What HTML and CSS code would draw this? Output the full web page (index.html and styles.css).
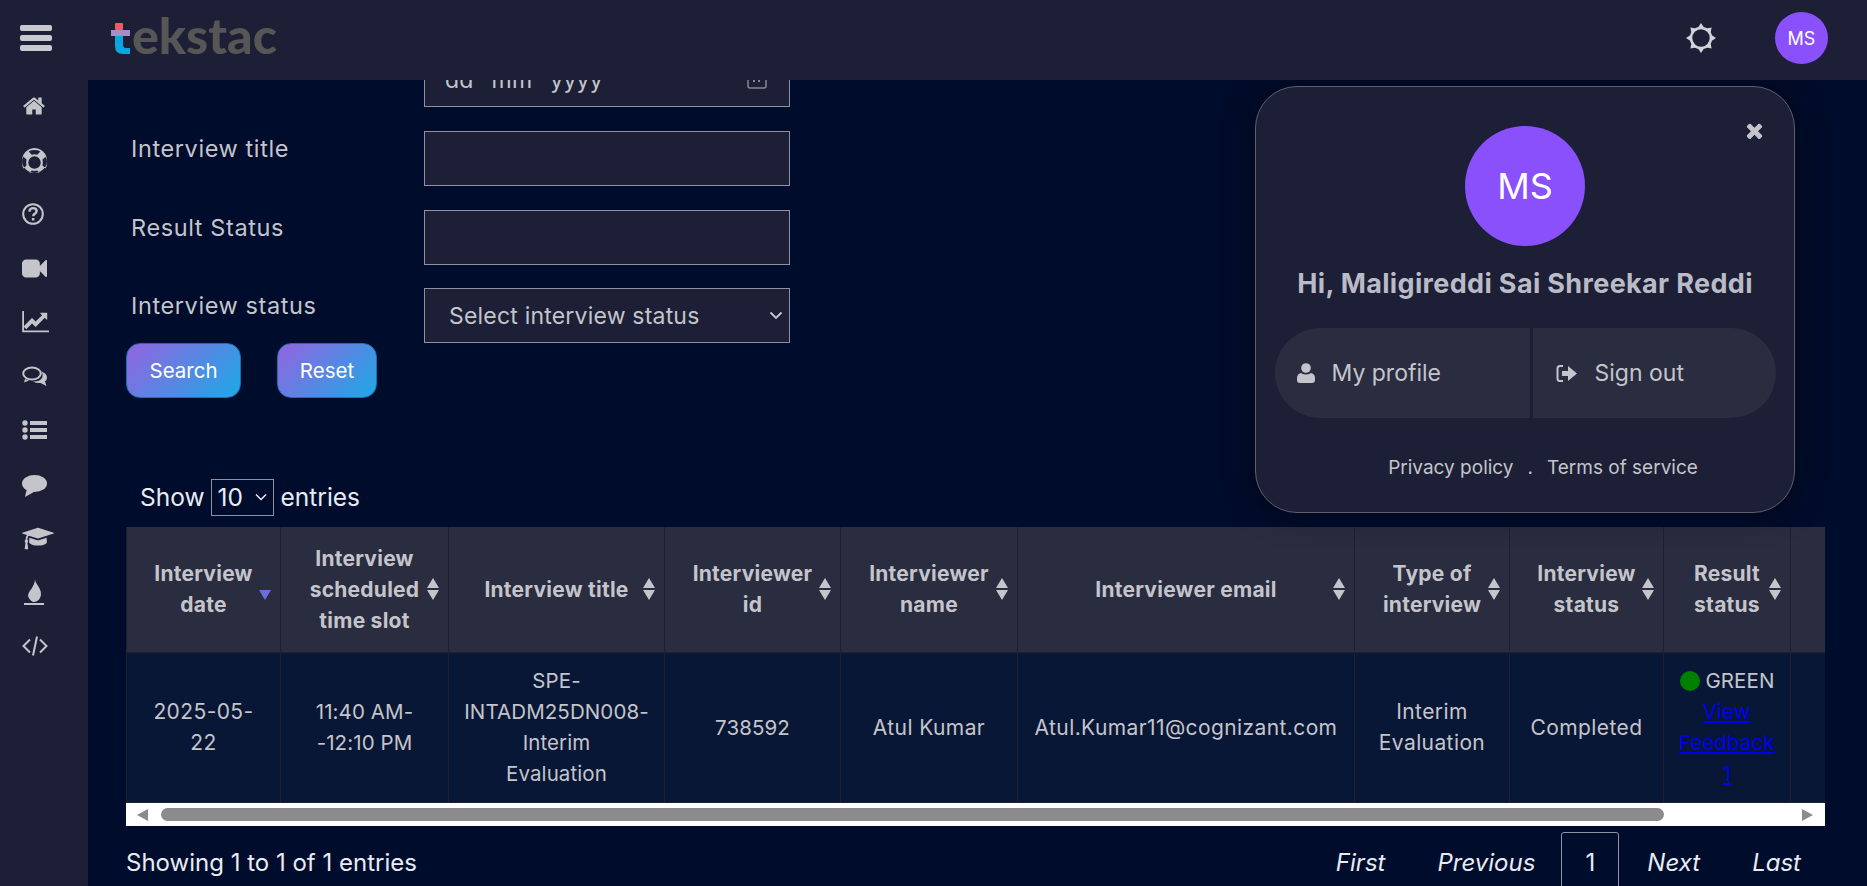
FILE: index.html
```html
<!DOCTYPE html>
<html lang="en">
<head>
    <meta charset="UTF-8">
    <title>Tekstac - Interview results</title>
    <link rel="stylesheet" href="styles.css">
</head>
<body>
    <header class="topbar">
        <div class="menu-btn"><span></span><span></span><span></span></div>
        <div class="logo">
            <svg class="logo-t" viewBox="0 0 19 37"><rect x="4" y="6" width="8" height="7" rx="1" fill="#ef5a6a"/><path d="M4 19h8v9q0 3 3 3h4v6h-7q-8 0-8-8z" fill="#0aa5de"/><rect x="0" y="13" width="19" height="6" fill="#a78fc6"/></svg><span>ekstac</span>
        </div>
        <div class="topbar-right">
            <svg class="theme-icon" viewBox="0 0 30 30"><circle cx="15" cy="15" r="10" fill="none" stroke="#d2d3d8" stroke-width="2.6"/><path d="M15 0l3 4.500h-6zM15 30l-3-4.500h6zM0 15l4.500-3v6zM30 15l-4.500 3v-6zM4.400 4.400l5.300 1-4.300 4.300zM25.600 25.600l-5.300-1 4.300-4.300zM25.600 4.400l-1 5.300-4.300-4.300zM4.400 25.600l1-5.300 4.300 4.300z" fill="#d2d3d8"/></svg>
            <div class="avatar">MS</div>
        </div>
    </header>

    <div class="layout">
        <aside class="sidebar">
            <a class="side-item"><svg width="24" height="24" viewBox="0 0 1792 1792"><path d="M1472 992v480q0 26-19 45t-45 19h-384v-384h-256v384h-384q-26 0-45-19t-19-45v-480q0-1 .5-3t.5-3l575-474 575 474q1 2 1 6zm223-69l-62 74q-8 9-21 11h-3q-13 0-21-7l-692-577-692 577q-12 8-24 7-13-2-21-11l-62-74q-8-10-7-23.500t11-21.500l719-599q32-26 76-26t76 26l244 204v-195q0-14 9-23t23-9h192q14 0 23 9t9 23v408l219 182q10 8 11 21.500t-7 23.500z"/></svg></a>
            <a class="side-item"><svg width="25" height="25" viewBox="128 128 1536 1536"><path d="M896 128q209 0 385.500 103t279.500 279.500 103 385.500-103 385.500-279.500 279.500-385.500 103-385.500-103-279.500-279.500-103-385.500 103-385.500 279.500-279.500 385.500-103zm0 128q-190 0-361 90l194 194q82-28 167-28t167 28l194-194q-171-90-361-90zm-678 1129l194-194q-28-82-28-167t28-167l-194-194q-90 171-90 361t90 361zm678 407q190 0 361-90l-194-194q-82 28-167 28t-167-28l-194 194q171 90 361 90zm0-384q159 0 271.500-112.500t112.500-271.500-112.500-271.500-271.500-112.500-271.500 112.500-112.500 271.500 112.500 271.500 271.500 112.500zm484-217l194 194q90-171 90-361t-90-361l-194 194q28 82 28 167t-28 167z"/></svg></a>
            <a class="side-item"><svg width="22" height="22" viewBox="0 0 22 22"><circle cx="11" cy="11" r="9.800" fill="none" stroke="#c4c5cb" stroke-width="2"/><path d="M7.400 8.600q.3-3.500 3.700-3.500 3.500 0 3.500 3 0 1.800-1.900 2.800-1.500.8-1.500 2.400" fill="none" stroke="#c4c5cb" stroke-width="2.400"/><rect x="9.900" y="15" width="2.500" height="2.500"/></svg></a>
            <a class="side-item"><svg width="25" height="25" viewBox="0 0 1792 1792"><path d="M1792 352v1088q0 42-39 59-13 5-25 5-27 0-45-19l-403-403v166q0 119-84.500 203.500t-203.500 84.500h-704q-119 0-203.500-84.500t-84.500-203.500v-704q0-119 84.500-203.500t203.500-84.500h704q119 0 203.500 84.500t84.500 203.500v165l403-402q18-19 45-19 12 0 25 5 39 17 39 59z"/></svg></a>
            <a class="side-item"><svg width="29" height="25" viewBox="0 0 2048 1792"><path d="M1920 1472v128h-1920v-1536h128v1408h1792zm-128-1248v435q0 21-19.500 29.500t-35.500-7.500l-121-121-633 633q-10 10-23 10t-23-10l-233-233-416 416-192-192 585-585q10-10 23-10t23 10l233 233 464-464-121-121q-16-16-7.500-35.500t29.500-19.500h435q14 0 23 9t9 23z"/></svg></a>
            <a class="side-item"><svg width="26" height="21" viewBox="0 0 26 21"><ellipse cx="10" cy="7.500" rx="8.800" ry="6" fill="none" stroke="#c4c5cb" stroke-width="2"/><path d="M3 13l-1 3.500 5-2zM19.500 5.500q5.500 2 5.500 6 0 2.500-2 4l1.500 4.500-6-3q-4 .5-7.500-1.500 7 0 9-3.500 1.500-3-.5-6.500z"/></svg></a>
            <a class="side-item"><svg width="25" height="20" viewBox="0 0 25 20"><circle cx="3" cy="3" r="2.700"/><circle cx="3" cy="10" r="2.700"/><circle cx="3" cy="17" r="2.700"/><rect x="8" y="1" width="17" height="4"/><rect x="8" y="8" width="17" height="4"/><rect x="8" y="15" width="17" height="4"/></svg></a>
            <a class="side-item"><svg width="25" height="26" viewBox="0 0 25 26"><ellipse cx="12.500" cy="12.500" rx="12.500" ry="8.500"/><path d="M5 17l-2 9 9-5z"/></svg></a>
            <a class="side-item"><svg width="32" height="25" viewBox="0 0 2304 1792"><path d="M1774 836l18 316q4 69-82 128t-235 93.500-323 34.500-323-34.500-235-93.500-82-128l18-316 574 181q22 7 48 7t48-7zm530-324q0 23-22 31l-1120 352q-4 1-10 1t-10-1l-652-206q-43 34-71 111.500t-34 178.500q63 36 63 109 0 69-58 107l58 433q2 14-8 25-9 11-24 11h-192q-15 0-24-11-10-11-8-25l58-433q-58-38-58-107 0-73 65-111 11-207 98-330l-333-104q-22-8-22-31t22-31l1120-352q4-1 10-1t10 1l1120 352q22 8 22 31z"/></svg></a>
            <a class="side-item"><svg width="22" height="26" viewBox="0 0 22 26"><path d="M13 0C13 5 19 8 19 15C19 20 15 23 12 23C10 23 7.500 21 6 17C6 12 13 8 13 0z"/><rect x="2" y="24" width="20" height="2"/></svg></a>
            <a class="side-item"><svg width="26" height="20" viewBox="0 0 26 20"><path d="M8 3.500L1.500 10 8 16.500M18 3.500l6.500 6.500-6.500 6.500" fill="none" stroke="#c4c5cb" stroke-width="2"/><path d="M15 .5L11 19.500" fill="none" stroke="#c4c5cb" stroke-width="2"/></svg></a>
        </aside>

        <main class="content">
            <form class="filter-form">
                <div class="form-row">
                    <label>Interview date</label>
                    <div class="field date-field">
                        <div class="date-parts"><span>dd</span><span>mm</span><span>yyyy</span></div>
                        <svg width="20" height="20" viewBox="0 0 20 20"><rect x="1" y="3" width="18" height="15" rx="2" fill="none" stroke="#85868f" stroke-width="1.500"/><rect x="6" y="10" width="2" height="2" fill="#85868f"/><rect x="11" y="10" width="2" height="2" fill="#85868f"/></svg>
                    </div>
                </div>
                <div class="form-row">
                    <label>Interview title</label>
                    <div class="field"></div>
                </div>
                <div class="form-row">
                    <label>Result Status</label>
                    <div class="field"></div>
                </div>
                <div class="form-row">
                    <label>Interview status</label>
                    <div class="field select-field">
                        <span>Select interview status</span>
                        <svg width="14" height="9" viewBox="0 0 14 9"><path d="M1.500 1.500L7 7l5.500-5.500" fill="none" stroke="#c8cad2" stroke-width="1.800"/></svg>
                    </div>
                </div>
                <div class="form-actions">
                    <button type="button" class="btn btn-search">Search</button>
                    <button type="button" class="btn btn-reset">Reset</button>
                </div>
            </form>

            <div class="length-row">
                Show
                <div class="length-select">10 <svg width="12" height="8" viewBox="0 0 12 8"><path d="M1 1.500l5 5 5-5" fill="none" stroke="#e8ecf5" stroke-width="1.500"/></svg></div>
                entries
            </div>

            <div class="table-wrap">
                <table class="result-table">
                    <colgroup>
                        <col class="c1"><col class="c2"><col class="c3"><col class="c4"><col class="c5"><col class="c6"><col class="c7"><col class="c8"><col class="c9"><col class="c10">
                    </colgroup>
                    <thead>
                        <tr>
                            <th class="sort-active">Interview<br>date</th>
                            <th>Interview<br>scheduled<br>time slot</th>
                            <th>Interview title</th>
                            <th>Interviewer<br>id</th>
                            <th>Interviewer<br>name</th>
                            <th>Interviewer email</th>
                            <th>Type of<br>interview</th>
                            <th>Interview<br>status</th>
                            <th>Result<br>status</th>
                            <th>Interview<br>Recording</th>
                        </tr>
                    </thead>
                    <tbody>
                        <tr>
                            <td>2025-05-<br>22</td>
                            <td class="tight">11:40 AM-<br>-12:10 PM</td>
                            <td class="tight">SPE-<br>INTADM25DN008-<br>Interim<br>Evaluation</td>
                            <td class="tight">738592</td>
                            <td>Atul Kumar</td>
                            <td>Atul.Kumar11@cognizant.com</td>
                            <td>Interim<br>Evaluation</td>
                            <td>Completed</td>
                            <td class="tight"><span class="dot"></span> GREEN<br><a href="#" class="feedback-link">View<br>Feedback<br>1</a></td>
                            <td></td>
                        </tr>
                    </tbody>
                </table>
            </div>
            <div class="h-scroll">
                <span class="arrow-left"></span>
                <span class="thumb"></span>
                <span class="arrow-right"></span>
            </div>

            <div class="table-foot">
                <div>Showing 1 to 1 of 1 entries</div>
                <nav class="pager">
                    <a>First</a>
                    <a>Previous</a>
                    <a class="current">1</a>
                    <a>Next</a>
                    <a>Last</a>
                </nav>
            </div>

            <div class="profile-popup">
                <svg class="popup-close" width="17" height="17" viewBox="110 238 1188 1316"><path d="M1298 1322q0 40-28 68l-136 136q-28 28-68 28t-68-28l-294-294-294 294q-28 28-68 28t-68-28l-136-136q-28-28-28-68t28-68l294-294-294-294q-28-28-28-68t28-68l136-136q28-28 68-28t68 28l294 294 294-294q28-28 68-28t68 28l136 136q28 28 28 68t-28 68l-294 294 294 294q28 28 28 68z"/></svg>
                <div class="popup-avatar">MS</div>
                <h2>Hi, Maligireddi Sai Shreekar Reddi</h2>
                <div class="popup-actions">
                    <a class="action-left"><svg width="18" height="20" viewBox="0 0 18 20"><circle cx="9" cy="5" r="4.800"/><path d="M0 17v-2q0-4 4-5 5 3 10 0 4 1 4 5v2q0 3-3 3H3q-3 0-3-3z"/></svg>My profile</a>
                    <a class="action-right"><svg width="21" height="19" viewBox="0 0 21 19"><path d="M7 2H4Q1.500 2 1.500 4.500v10Q1.500 17 4 17h3" fill="none" stroke="#c4c5cb" stroke-width="2"/><path d="M6 7h6V2l9 7.500-9 7.500v-5H6z"/></svg>Sign out</a>
                </div>
                <div class="popup-links">
                    <a>Privacy policy</a>
                    <span>.</span>
                    <a>Terms of service</a>
                </div>
            </div>
        </main>
    </div>
</body>
</html>
```

FILE: styles.css
```css
* {
    box-sizing: border-box;
}
html, body {
    height: 100%;
}
body {
    margin: 0;
    overflow: hidden;
    display: flex;
    flex-direction: column;
    background: #000c2b;
    font-family: Inter, "Noto Sans", sans-serif;
    color: #c4c5cb;
}
svg {
    fill: #c4c5cb;
    flex-shrink: 0;
}

/* top bar */
.topbar {
    height: 80px;
    flex-shrink: 0;
    display: flex;
    align-items: center;
    padding-bottom: 4px;
    background: #1c1f35;
    position: relative;
    z-index: 5;
}
.menu-btn {
    width: 32px;
    margin-left: 20px;
    display: flex;
    flex-direction: column;
    gap: 4.5px;
}
.menu-btn span {
    height: 5.5px;
    border-radius: 2px;
    background: #c9cad0;
}
.logo {
    margin-left: 59px;
    display: flex;
    align-items: flex-end;
    height: 37px;
    margin-top: -6px;
    font-family: Lato, sans-serif;
    font-weight: 900;
    font-size: 50px;
    line-height: 37px;
    color: #565656;
}
.logo-t {
    width: 19px;
    height: 37px;
    margin-right: 2px;
}
.topbar-right {
    margin-left: auto;
    display: flex;
    align-items: center;
    gap: 59px;
    padding-right: 39px;
}
.theme-icon {
    width: 30px;
    height: 30px;
}
.avatar {
    width: 53px;
    height: 52px;
    border-radius: 50%;
    background: #8950fc;
    color: #fff;
    font-size: 18px;
    display: flex;
    align-items: center;
    justify-content: center;
}

/* layout */
.layout {
    flex: 1;
    display: flex;
    min-height: 0;
}
.sidebar {
    width: 88px;
    flex-shrink: 0;
    background: #1c1f35;
    display: flex;
    flex-direction: column;
    margin-top: -1px;
}
.side-item {
    height: 54px;
    padding-left: 22px;
    display: flex;
    align-items: center;
}
.content {
    flex: 1;
    min-width: 0;
    position: relative;
    overflow: hidden;
    padding: 0 42px 0 38px;
}

/* filter form */
.filter-form {
    margin-top: -28px;
}
.form-row {
    display: flex;
    height: 56px;
    margin-bottom: 23px;
    padding-left: 6px;
}
.form-row:nth-child(3) {
    margin-bottom: 22px;
}
.form-row:nth-child(4) {
    height: 55px;
    margin-bottom: 0;
}
.form-row label {
    width: 292px;
    font-size: 23.5px;
    letter-spacing: 0.6px;
    line-height: 30px;
    padding-top: 3px;
    margin-left: -1px;
    margin-right: 1px;
}
.field {
    width: 366px;
    height: 55px;
    background: #1c1f35;
    border: 1px solid #8f919c;
    display: flex;
    align-items: center;
    justify-content: space-between;
    font-size: 23px;
    letter-spacing: 0.2px;
    padding: 0 6px 0 24px;
}
.date-field {
    padding: 0 22px 0 20px;
}
.date-parts {
    display: flex;
    gap: 18px;
}
.form-actions {
    display: flex;
    gap: 36px;
}
.btn {
    height: 55px;
    border: 1px solid #1c6fb0;
    border-radius: 14px;
    background: linear-gradient(135deg, #9463e0, #1ca9e6);
    color: #fff;
    font-family: inherit;
    font-size: 20.5px;
}
.btn-search {
    width: 115px;
}
.btn-reset {
    width: 100px;
}

/* table */
.length-row {
    display: flex;
    align-items: center;
    gap: 6px;
    height: 38px;
    margin-top: 80px;
    padding-left: 14px;
    font-size: 24.5px;
    color: #e8ecf5;
}
.length-select {
    width: 63px;
    height: 37px;
    margin-right: 1px;
    border: 1px solid #8f919c;
    display: flex;
    align-items: center;
    gap: 12px;
    padding-left: 6px;
}
.table-wrap {
    width: 1699px;
    height: 276px;
    margin-top: 11px;
    overflow: hidden;
}
.result-table {
    width: 1853px;
    table-layout: fixed;
    border-collapse: collapse;
    text-align: center;
    font-size: 21px;
    letter-spacing: 0.4px;
    line-height: 31px;
}
.c1 { width: 154px; }
.c2 { width: 168px; }
.c3 { width: 216px; }
.c4 { width: 176px; }
.c5 { width: 177px; }
.c6 { width: 337px; }
.c7 { width: 155px; }
.c8 { width: 154px; }
.c9 { width: 127px; }
.c10 { width: 189px; }
.result-table th {
    height: 125px;
    padding: 0 4px;
    background: #2a2c40;
    border: 1px solid #1e2030;
    border-top: none;
    font-weight: 700;
    letter-spacing: 0.25px;
    position: relative;
}
.result-table th::before,
.result-table th::after {
    content: "";
    position: absolute;
    right: 9px;
    border-left: 6px solid transparent;
    border-right: 6px solid transparent;
}
.result-table th::before {
    top: 51px;
    border-bottom: 10px solid #c4c5cb;
}
.result-table th::after {
    top: 63px;
    border-top: 10px solid #c4c5cb;
}
.result-table th.sort-active::before {
    display: none;
}
.result-table th.sort-active::after {
    border-top-color: #6c70d6;
}
.result-table td {
    height: 150px;
    padding: 0 4px;
    background: #091736;
    border: 1px solid #1e2030;
}
.result-table td.tight {
    font-size: 20.5px;
    letter-spacing: 0.1px;
}
.dot {
    display: inline-block;
    width: 20px;
    height: 20px;
    border-radius: 50%;
    background: #008000;
    vertical-align: -3px;
}
.feedback-link {
    color: #0000ee;
}
.h-scroll {
    width: 1699px;
    height: 23px;
    background: #fff;
    position: relative;
    display: flex;
    align-items: center;
}
.arrow-left {
    width: 0;
    height: 0;
    margin-left: 11px;
    border-top: 6px solid transparent;
    border-bottom: 6px solid transparent;
    border-right: 11px solid #8b8b8b;
}
.thumb {
    width: 1503px;
    height: 13px;
    margin-left: 13px;
    border-radius: 7px;
    background: #8b8b8b;
}
.arrow-right {
    width: 0;
    height: 0;
    margin-left: auto;
    margin-right: 12px;
    border-top: 6px solid transparent;
    border-bottom: 6px solid transparent;
    border-left: 11px solid #8b8b8b;
}
.table-foot {
    width: 1699px;
    display: flex;
    justify-content: space-between;
    align-items: center;
    margin-top: 6px;
    font-size: 24px;
    color: #e8ecf5;
}
.pager {
    display: flex;
    align-items: stretch;
    font-style: italic;
}
.pager a {
    height: 60px;
    padding: 0 25px;
    display: flex;
    align-items: center;
    border: 1px solid transparent;
}
.pager a:last-child {
    padding-right: 23px;
}
.pager a.current {
    width: 58px;
    margin-right: 2px;
    padding: 0;
    justify-content: center;
    font-style: normal;
    border: 1px solid #8f919c;
    border-radius: 3px;
}

/* profile popup */
.profile-popup {
    position: absolute;
    left: 1167px;
    top: 6px;
    width: 540px;
    height: 427px;
    padding-top: 39px;
    background: #1c1f35;
    border: 1px solid #5d5f6e;
    border-radius: 42px;
    box-shadow: 0 0 30px rgba(0, 0, 0, 0.5);
    display: flex;
    flex-direction: column;
    align-items: center;
}
.popup-close {
    position: absolute;
    right: 31px;
    top: 35px;
}
.popup-avatar {
    width: 120px;
    height: 120px;
    border-radius: 50%;
    background: #8950fc;
    color: #fff;
    font-size: 36px;
    display: flex;
    align-items: center;
    justify-content: center;
}
.profile-popup h2 {
    margin: 19px 0 25px;
    font-size: 27px;
    letter-spacing: 0.35px;
    line-height: 38px;
    font-weight: 700;
    color: #b9bbc6;
}
.popup-actions {
    width: 501px;
    height: 90px;
    display: flex;
    gap: 3px;
    font-size: 23px;
}
.popup-actions a {
    background: #2a2c40;
    display: flex;
    align-items: center;
}
.action-left {
    width: 255px;
    border-radius: 45px 0 0 45px;
    padding-left: 22px;
    gap: 17px;
}
.action-right {
    width: 243px;
    border-radius: 0 45px 45px 0;
    padding-left: 23px;
    gap: 18px;
}
.popup-links {
    display: flex;
    gap: 14px;
    margin-top: 38px;
    margin-left: 36px;
    font-size: 19px;
}
```
